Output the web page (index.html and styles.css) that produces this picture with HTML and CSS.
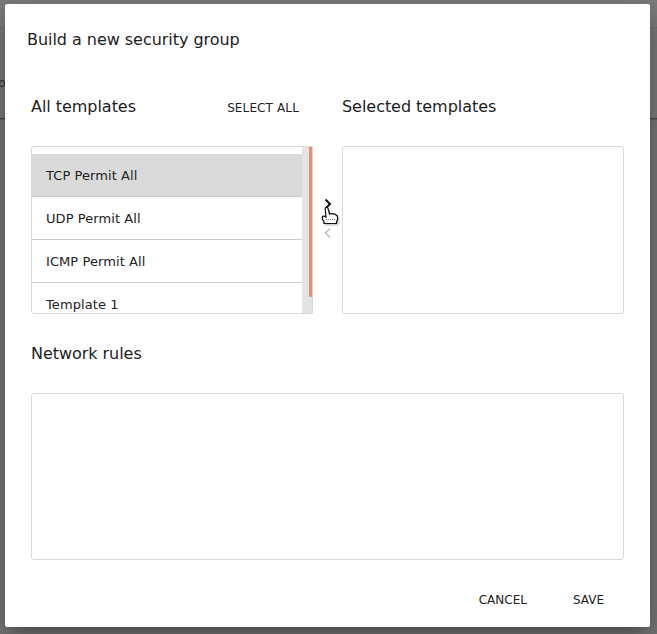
FILE: index.html
```
<!DOCTYPE html>
<html lang="en">
<head>
<meta charset="utf-8">
<title>Build a new security group</title>
<link rel="stylesheet" href="styles.css">
</head>
<body>
<div class="backdrop">
  <div class="backdrop-bar"></div>
  <div class="backdrop-panel">o</div>
</div>
<main class="dialog">
  <h1 class="title">Build a new security group</h1>
  <div class="transfer">
    <section class="source">
      <header class="head">
        <h2>All templates</h2>
        <button class="btn">SELECT ALL</button>
      </header>
      <div class="box list-box">
        <ul class="list">
          <li class="item selected">TCP Permit All</li>
          <li class="item">UDP Permit All</li>
          <li class="item">ICMP Permit All</li>
          <li class="item">Template 1</li>
        </ul>
        <div class="track"><div class="thumb"></div></div>
      </div>
    </section>
    <div class="arrows">
      <svg class="arrow" width="8" height="12" viewBox="0 0 8 12"><path d="M1.5 1.5 L6 6 L1.5 10.5"/></svg>
      <svg class="arrow disabled" width="8" height="12" viewBox="0 0 8 12"><path d="M6 1.5 L1.5 6 L6 10.5"/></svg>
      <svg class="cursor" width="18" height="19" viewBox="0 0 18 19"><path d="M5 1.500 Q6.500 1 7 2.500 L8.500 8 Q9.500 7 10.800 8 Q12 7 13.200 8.300 Q14.600 7.800 15 9.200 Q16.500 9.500 16.500 11 V14 L15.500 15.500 V17.500 H3 V15.500 L1.500 13.500 V10.500 Q3 9.500 5 11 L4.200 3 Q4 2 5 1.500 Z"/><path class="detail" d="M5 13.500 H14"/></svg>
    </div>
    <section class="target">
      <header class="head"><h2>Selected templates</h2></header>
      <div class="box"></div>
    </section>
  </div>
  <h2 class="rules-title">Network rules</h2>
  <div class="box rules-box"></div>
  <footer class="actions">
    <button class="btn">CANCEL</button>
    <button class="btn">SAVE</button>
  </footer>
</main>
</body>
</html>
```
FILE: styles.css
```
* { box-sizing: border-box; }
body {
  margin: 0;
  height: 634px;
  padding: 4px 7px 7px 5px;
  overflow: hidden;
  background: #757575;
  color: #212121;
  font-family: "DejaVu Sans", sans-serif;
}
h1, h2 { margin: 0; font-size: 16px; font-weight: 400; line-height: 20px; letter-spacing: -.04px; }
.backdrop { position: absolute; inset: 0; z-index: -1; }
.backdrop-bar { height: 28px; border-bottom: 1px solid #6c6c6c; background: #7c7c7c; }
.backdrop-panel {
  height: 91px;
  padding-top: 47px;
  margin-left: -2px;
  border-bottom: 1px solid #484848;
  background: #797979;
  box-shadow: 0 1px 1px #606060;
  color: #303030;
  font-size: 13px;
  line-height: 16px;
}
.dialog {
  display: flex;
  flex-direction: column;
  height: 623px;
  padding: 26px 26px 0;
  border-radius: 2px;
  background: #fff;
  box-shadow: 0 11px 15px -7px rgba(0,0,0,.2), 0 9px 46px 8px rgba(0,0,0,.12), 0 8px 24px rgba(0,0,0,.14);
}
.title { margin-left: -4px; }
.transfer { display: grid; grid-template-columns: 282px 29px 282px; margin-top: 47px; }
.head { display: flex; justify-content: space-between; align-items: center; height: 20px; padding-right: 14px; margin-bottom: 29px; }
.head h2 { white-space: nowrap; }
.btn {
  padding: 0;
  border: 0;
  background: none;
  color: #212121;
  font: 12px/16px "DejaVu Sans", sans-serif;
}
.head .btn { position: relative; top: 1px; letter-spacing: .13px; }
.box { height: 168px; border: 1px solid #d9d9d9; border-radius: 3px; background: #fff; }
.list-box { display: flex; overflow: hidden; border-radius: 3px 0 0 3px; }
.list { flex: 1; margin: 0; padding: 7px 0 0; list-style: none; }
.item { height: 43px; padding-left: 14px; border-bottom: 1px solid #ccc; font-size: 13px; line-height: 44px; letter-spacing: .08px; }
.selected { background: #dadada; }
.track { width: 10px; background: #e4e4e4; }
.thumb { width: 3px; height: 150px; margin-left: 7px; background: #ee8f6b; border-radius: 0 0 1px 1px; }
.arrows { position: relative; display: flex; flex-direction: column; align-items: center; gap: 17px; padding-top: 101px; }
.arrow { fill: none; stroke: #111; stroke-width: 2; }
.disabled { stroke: #bdbdbd; stroke-width: 1.6; }
.cursor { position: absolute; left: 8px; top: 109px; fill: #fff; stroke: #111; stroke-width: 1.2; filter: drop-shadow(1px 1px 1px rgba(0,0,0,.3)); }
.detail { stroke: #777; stroke-width: 1; stroke-dasharray: 1 1; }
.rules-title { margin-top: 30px; }
.rules-box { height: 167px; margin-top: 29px; }
.actions { display: flex; justify-content: flex-end; gap: 46px; padding-right: 20px; margin-top: 32px; }
```
